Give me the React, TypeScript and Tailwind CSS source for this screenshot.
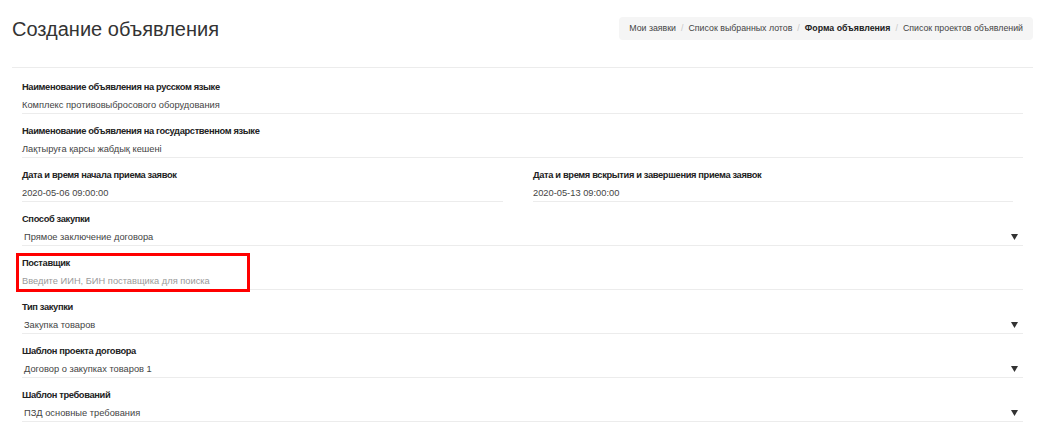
import React from "react";

const Arrow = () => (
  <svg width="7" height="6" viewBox="0 0 7 6" className="shrink-0">
    <path d="M0 0 H7 L3.5 6 Z" fill="#333" />
  </svg>
);

type FieldProps = {
  label: string;
  value: string;
  select?: boolean;
  placeholder?: boolean;
  className?: string;
  children?: React.ReactNode;
};

function Field({ label, value, select, placeholder, className = "", children }: FieldProps) {
  return (
    <div className={`relative h-[44px] pt-[9px] border-b border-[#ececec] ${className}`}>
      <div className="text-[9.3px] leading-4 font-bold tracking-[-0.35px] text-[#222]">{label}</div>
      <div className="mt-[2px] flex items-center justify-between leading-4 h-4">
        <span
          className={`text-[9.3px] ${select ? "pl-[2px]" : ""} ${
            placeholder ? "text-[#9a9a9a]" : "text-[#444]"
          }`}
        >
          {value}
        </span>
        {select && (
          <span className="pr-[5px]">
            <Arrow />
          </span>
        )}
      </div>
      {children}
    </div>
  );
}

export default function App() {
  const crumbs = ["Мои заявки", "Список выбранных лотов", "Форма объявления", "Список проектов объявлений"];

  return (
    <div className="min-h-screen bg-white px-3 font-['Liberation_Sans',Arial,sans-serif]">
      {/* Header */}
      <div className="h-[68px] border-b border-[#ececec] flex items-start justify-between">
        <h1 className="mt-[15px] text-[20px] leading-7 text-[#333] font-normal">Создание объявления</h1>
        <nav className="mt-[17px] h-[23px] px-[10px] bg-[#f5f5f5] rounded-[4px] flex items-center text-[8.8px] text-[#444]">
          {crumbs.map((c, i) => (
            <React.Fragment key={c}>
              {i > 0 && <span className="px-[5px] text-[#c8c8c8]">/</span>}
              <span className={i === 2 ? "font-bold text-[#222]" : ""}>{c}</span>
            </React.Fragment>
          ))}
        </nav>
      </div>

      {/* Form */}
      <div className="pl-[10px] pr-[10px] pt-[2px]">
        <Field label="Наименование объявления на русском языке" value="Комплекс противовыбросового оборудования" />
        <Field label="Наименование объявления на государственном языке" value="Лақтыруға қарсы жабдық кешені" />
        <div className="flex gap-[30px]">
          <Field className="w-[481px]" label="Дата и время начала приема заявок" value="2020-05-06 09:00:00" />
          <Field className="w-[480px]" label="Дата и время вскрытия и завершения приема заявок" value="2020-05-13 09:00:00" />
        </div>
        <Field label="Способ закупки" value="Прямое заключение договора" select />
        <Field label="Поставщик" value="Введите ИИН, БИН поставщика для поиска" placeholder>
          <div className="absolute left-[-6px] top-[7px] w-[234px] h-[39px] border-[3px] border-[#ff0000] pointer-events-none" />
        </Field>
        <Field label="Тип закупки" value="Закупка товаров" select />
        <Field label="Шаблон проекта договора" value="Договор о закупках товаров 1" select />
        <Field label="Шаблон требований" value="ПЗД основные требования" select />
      </div>
    </div>
  );
}
